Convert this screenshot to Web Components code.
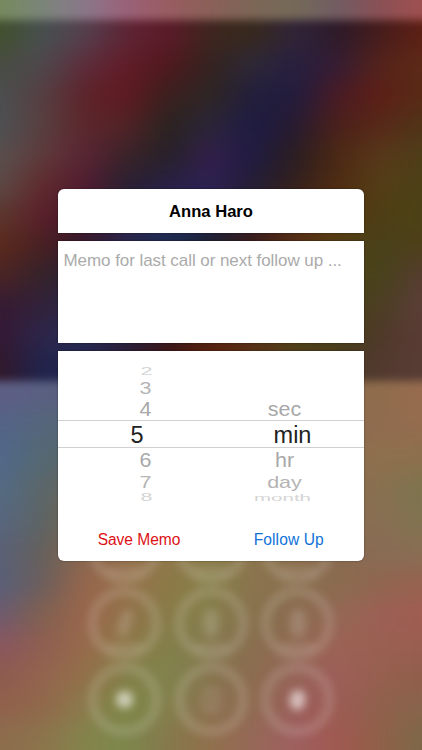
<!DOCTYPE html>
<html lang="en">
<head>
<meta charset="utf-8">
<meta name="viewport" content="width=device-width, initial-scale=1">
<title>Follow Up</title>
<style>
  html, body {
    margin: 0;
    height: 100%;
    overflow: hidden;
  }

  body {
    font-family: "Liberation Sans", Helvetica, Arial, sans-serif;
    background: #55443c;
  }
</style>
</head>
<body>
<memo-screen>
  <blur-wallpaper slot="backdrop"></blur-wallpaper>
  <dial-pad slot="backdrop"></dial-pad>
  <memo-dialog>
    <span slot="title">Anna Haro</span>
    <memo-field placeholder="Memo for last call or next follow up ..."></memo-field>
    <wheel-picker slot="picker">
      <wheel-column values="2,3,4,5,6,7,8" style="--shift: 11px; --pick: -8.5px; --edge: 1px"></wheel-column>
      <wheel-column values=",,sec,min,hr,day,month" style="--shift: -3px; --pick: 8px; --edge: -2px; --edge-size: 20.5px"></wheel-column>
    </wheel-picker>
    <dialog-action slot="actions" style="--tint: #dc1216; --track: -.05px; --nudge: 9px">Save Memo</dialog-action>
    <dialog-action slot="actions" style="--tint: #1272d8; --track: .08px; --nudge: 2.5px">Follow Up</dialog-action>
  </memo-dialog>
</memo-screen>

<script>
// Wallpaper colours: one string per row, eleven stops from left to right.
const WALLPAPER = {
  status: [
    '768a5c 7a857a 89788a 9b6078 985c60 8a6058 7c6656 746a58 705c64 8a5054 a05050',
  ],
  dark: [
    '42502c 465050 55404f 5e2434 5c1a28 3d261e 37291c 31243a 2c1a28 461c1c 5e2014',
    '474d42 4e484e 5d2c3a 611c28 50181e 33231e 2d2838 261f40 351c34 56231a 5c2a16',
    '4b4f50 563f42 5d232a 60191f 3a201e 2e2624 221e3c 211c3e 4a1a24 5d1f16 582a16',
    '4d5054 583f3f 5c272c 522226 29231f 2b2538 1e1b44 261b30 4c201a 582818 503418',
    '58504e 5e3a3a 5a2434 3a2328 262128 331f4c 1f1b42 2a1d20 4c2814 58381a 4e3e18',
    '5c4a46 602a2c 521c30 282030 282044 2e2054 221d34 34201c 502c12 543e16 4c4016',
    '5c382e 5c1e2a 40182a 28203c 25245a 242048 281c28 4a2416 543412 4e3e14 4c4216',
    '5c2a1c 482022 36182a 2a2650 1c2e52 1a2230 401c18 5a3014 564014 48401a 4e4018',
    '4c2424 34222a 2a2038 20284c 1c2838 2e1c1c 50240f 583414 504214 46421a 563c30',
    '361a32 32223a 282444 242848 241c28 441c14 582a12 543c16 4c4218 4a3e22 5c3e38',
    '341834 2c264a 2a2a54 282040 34161a 56200f 583014 50401a 484018 4e3828 5a3c36',
    '32182a 20244e 22264c 2a1c30 441814 582410 56341a 4c3e1a 483a20 523a30 583c34',
  ],
  light: [
    '5e5e84 586082 5c6078 6c6070 80604c 90604c 946c4c 8c704c 8c6c4c 8e6c4c 986c4e',
    '526488 54667a 586870 686460 80684c 906c4c 90704c 8c704c 8c6c4c 906c50 946c4e',
    '50688a 546872 586468 706454 886c4c 90704c 8c744c 8c704c 8c6c4c 8e704e 8c704c',
    '546a84 5a6668 6c6458 80684c 90704c 8c744c 8c744c 8c704c 8c6c4c 887050 7c744e',
    '566680 5c6464 74644c 8c6c4c 90744c 8a784c 8c744c 8c704c 8c6c50 886e54 80744f',
    '5a6076 64605c 88664c 946e4c 90764c 8a7c4c 8c744c 8c704c 886850 886c54 886e54',
    '585f7a 6a5e5c 98664c 94704a 8c7a48 867e48 8a744e 8a6e4e 8a6c50 906650 966250',
    '6c5a70 80604f 9a664c 92724a 887c48 867e4c 88724e 8a6c50 946854 9c6054 a05c50',
    '885660 8e5e50 986a4c 8e7848 82804a 86784e 886e4e 906a52 9c6254 9a6052 9a5e50',
    '8e5a4e 946450 927048 84804a 80844c 86744e 8c6c50 966458 9e5e5a 96604e 905e4c',
    '90604c 90684a 8c7a4c 7e8848 84804c 8c7050 8e6c50 9c5e5c 9c5c54 90604c 88644c',
    '8c6c4c 8c744c 84844c 7c884c 86784c 90704c 966858 9e6060 a05850 906048 7c6848',
  ],
};

const BLEED = 30;

function define(name, cls) {
  if (!customElements.get(name)) customElements.define(name, cls);
}

class BlurWallpaper extends HTMLElement {
  constructor() {
    super();
    this.attachShadow({ mode: 'open' });
    this.shadowRoot.innerHTML = `
      <style>
        :host {
          display: block;
          overflow: hidden;
        }
        .scene {
          display: flex;
          flex-direction: column;
          height: calc(100% + ${BLEED * 2}px);
          margin: -${BLEED}px;
          filter: blur(4px);
        }
        .band { overflow: hidden; }
        .status { height: ${BLEED + 20}px; flex: none; }
        .dark { height: 361px; flex: none; }
        .light { flex: 1; }
        .mesh {
          display: flex;
          flex-direction: column;
          margin: -${BLEED}px;
          filter: blur(11px);
        }
        .row { height: 30px; flex: none; }
        .light .row { height: 31px; }
        .row:first-child { padding-top: ${BLEED}px; }
        .row:last-child { padding-bottom: ${BLEED * 2}px; }
        .status .row { padding-top: ${BLEED * 2}px; }
      </style>
      <div class="scene"></div>
    `;
    const scene = this.shadowRoot.querySelector('.scene');
    for (const [name, rows] of Object.entries(WALLPAPER)) {
      const band = document.createElement('div');
      band.className = `band ${name}`;
      const mesh = document.createElement('div');
      mesh.className = 'mesh';
      rows.forEach((row) => {
        const el = document.createElement('div');
        el.className = 'row';
        const stops = row.split(' ').map((hex, i) => `#${hex} ${BLEED * 2 + i * 42.2}px`);
        el.style.background = `linear-gradient(90deg, ${stops.join(', ')})`;
        mesh.appendChild(el);
      });
      band.appendChild(mesh);
      scene.appendChild(band);
    }
  }
}

class DialPad extends HTMLElement {
  constructor() {
    super();
    this.attachShadow({ mode: 'open' });
    this.shadowRoot.innerHTML = `
      <style>
        :host {
          display: grid;
          grid-template-columns: repeat(3, 73px);
          grid-auto-rows: 73px;
          gap: 3px 13.5px;
          justify-content: center;
          align-content: end;
          box-sizing: border-box;
          padding-bottom: 14px;
          filter: blur(4px);
        }
        .key {
          box-sizing: border-box;
          border: 9px solid rgba(255, 255, 255, .155);
          border-radius: 50%;
          display: flex;
          align-items: center;
          justify-content: center;
        }
        .mark {
          width: 16px;
          height: 28px;
          border-radius: 8px;
          background: rgba(255, 255, 255, .16);
        }
        .seven { transform: rotate(18deg); width: 12px; }
        .zero {
          box-sizing: border-box;
          width: 19px;
          height: 28px;
          background: rgba(255, 255, 255, .05);
          border: 5px solid rgba(255, 255, 255, .06);
        }
        .star, .hash {
          width: 17px;
          height: 17px;
          background: rgba(255, 255, 255, .6);
        }
        .hash { height: 20px; width: 15px; transform: rotate(8deg); }
        .lettered { flex-direction: column; justify-content: flex-end; gap: 6px; }
        .label {
          width: 36px;
          height: 8px;
          border-radius: 4px;
          background: rgba(255, 255, 255, .12);
        }
      </style>
      <div class="key lettered"><i class="label"></i></div>
      <div class="key lettered"><i class="label"></i></div>
      <div class="key lettered"><i class="label"></i></div>
      <div class="key lettered"><i class="mark seven"></i><i class="label"></i></div>
      <div class="key lettered"><i class="mark"></i><i class="label"></i></div>
      <div class="key lettered"><i class="mark"></i><i class="label"></i></div>
      <div class="key"><i class="mark star"></i></div>
      <div class="key"><i class="mark zero"></i></div>
      <div class="key"><i class="mark hash"></i></div>
    `;
  }
}

class MemoField extends HTMLElement {
  constructor() {
    super();
    this.attachShadow({ mode: 'open' });
    this.shadowRoot.innerHTML = `
      <style>
        :host {
          display: block;
          padding: 10px 5.5px;
          font-size: 17px;
          line-height: 20px;
          letter-spacing: -.06px;
          color: #ababab;
          white-space: nowrap;
        }
      </style>
      <div class="hint"></div>
    `;
  }

  connectedCallback() {
    this.shadowRoot.querySelector('.hint').textContent = this.getAttribute('placeholder') || '';
  }
}

class WheelColumn extends HTMLElement {
  constructor() {
    super();
    this.attachShadow({ mode: 'open' });
    this.shadowRoot.innerHTML = `
      <style>
        :host {
          display: grid;
          grid-template-rows: 13px 19px 24px 27px 24px 19px 13px;
          flex: 1;
          font-size: 21.5px;
          color: #a8a8a8;
        }
        .cell {
          display: flex;
          align-items: center;
          justify-content: center;
          line-height: 1;
          min-height: 0;
          transform: translate(var(--shift, 0), 1.3px) scaleY(var(--squash, 1));
        }
        .d1 { --squash: .91; }
        .d2 { --squash: .76; color: #b4b4b4; }
        .d3 {
          --squash: .48;
          font-size: var(--edge-size, 21.5px);
          color: #d4d4d4;
          transform: translateX(calc(var(--shift, 0px) + var(--edge, 0px))) scaleY(var(--squash));
        }
        .d0 {
          font-size: 23.5px;
          color: #222;
          transform: translate(calc(var(--shift, 0px) + var(--pick, 0px)), .5px);
        }
      </style>
    `;
  }

  connectedCallback() {
    if (this.shadowRoot.querySelector('.cell')) return;
    this.getAttribute('values').split(',').forEach((value, i) => {
      const cell = document.createElement('div');
      cell.className = `cell d${Math.abs(i - 3)}`;
      cell.textContent = value;
      this.shadowRoot.appendChild(cell);
    });
  }
}

class WheelPicker extends HTMLElement {
  constructor() {
    super();
    this.attachShadow({ mode: 'open' });
    this.shadowRoot.innerHTML = `
      <style>
        :host {
          display: flex;
          height: 139px;
          background:
            linear-gradient(#d0d0d0, #d0d0d0) 0 55px / 100% 1px no-repeat,
            linear-gradient(#d0d0d0, #d0d0d0) 0 82px / 100% 1px no-repeat;
        }
      </style>
      <slot></slot>
    `;
  }
}

class DialogAction extends HTMLElement {
  constructor() {
    super();
    this.attachShadow({ mode: 'open' });
    this.shadowRoot.innerHTML = `
      <style>
        :host {
          display: block;
          flex: 1;
        }
        button {
          all: unset;
          display: block;
          width: 100%;
          text-align: center;
          font-size: 15.6px;
          line-height: 20px;
          letter-spacing: var(--track, 0);
          text-indent: var(--nudge, 0);
          color: var(--tint);
          cursor: pointer;
        }
      </style>
      <button type="button"><slot></slot></button>
    `;
  }
}

class MemoDialog extends HTMLElement {
  constructor() {
    super();
    this.attachShadow({ mode: 'open' });
    this.shadowRoot.innerHTML = `
      <style>
        :host {
          display: flex;
          flex-direction: column;
          gap: 8px;
          width: 306px;
        }
        header, .memo, .panel {
          background: #fff;
          box-shadow: 0 0 2px rgba(0, 0, 0, .45);
        }
        header {
          height: 44.5px;
          line-height: 45px;
          border-radius: 6px 6px 0 0;
          text-align: center;
          font-size: 16.6px;
          font-weight: bold;
          color: #000;
        }
        .memo { height: 102px; }
        .panel {
          box-sizing: border-box;
          height: 210px;
          padding-top: 14px;
          border-radius: 0 0 6px 6px;
        }
        .actions {
          display: flex;
          padding-top: 26px;
        }
      </style>
      <header><slot name="title"></slot></header>
      <div class="memo"><slot></slot></div>
      <div class="panel">
        <slot name="picker"></slot>
        <div class="actions"><slot name="actions"></slot></div>
      </div>
    `;
  }
}

class MemoScreen extends HTMLElement {
  constructor() {
    super();
    this.attachShadow({ mode: 'open' });
    this.shadowRoot.innerHTML = `
      <style>
        :host {
          display: grid;
          grid-template: 100vh / 100vw;
          justify-items: center;
          align-items: center;
          overflow: hidden;
        }
        ::slotted(*) {
          grid-area: 1 / 1;
          z-index: 1;
        }
        ::slotted([slot="backdrop"]) {
          width: 100%;
          height: 100%;
          z-index: 0;
        }
      </style>
      <slot name="backdrop"></slot>
      <slot></slot>
    `;
  }
}

define('blur-wallpaper', BlurWallpaper);
define('dial-pad', DialPad);
define('memo-field', MemoField);
define('wheel-column', WheelColumn);
define('wheel-picker', WheelPicker);
define('dialog-action', DialogAction);
define('memo-dialog', MemoDialog);
define('memo-screen', MemoScreen);
</script>
</body>
</html>
